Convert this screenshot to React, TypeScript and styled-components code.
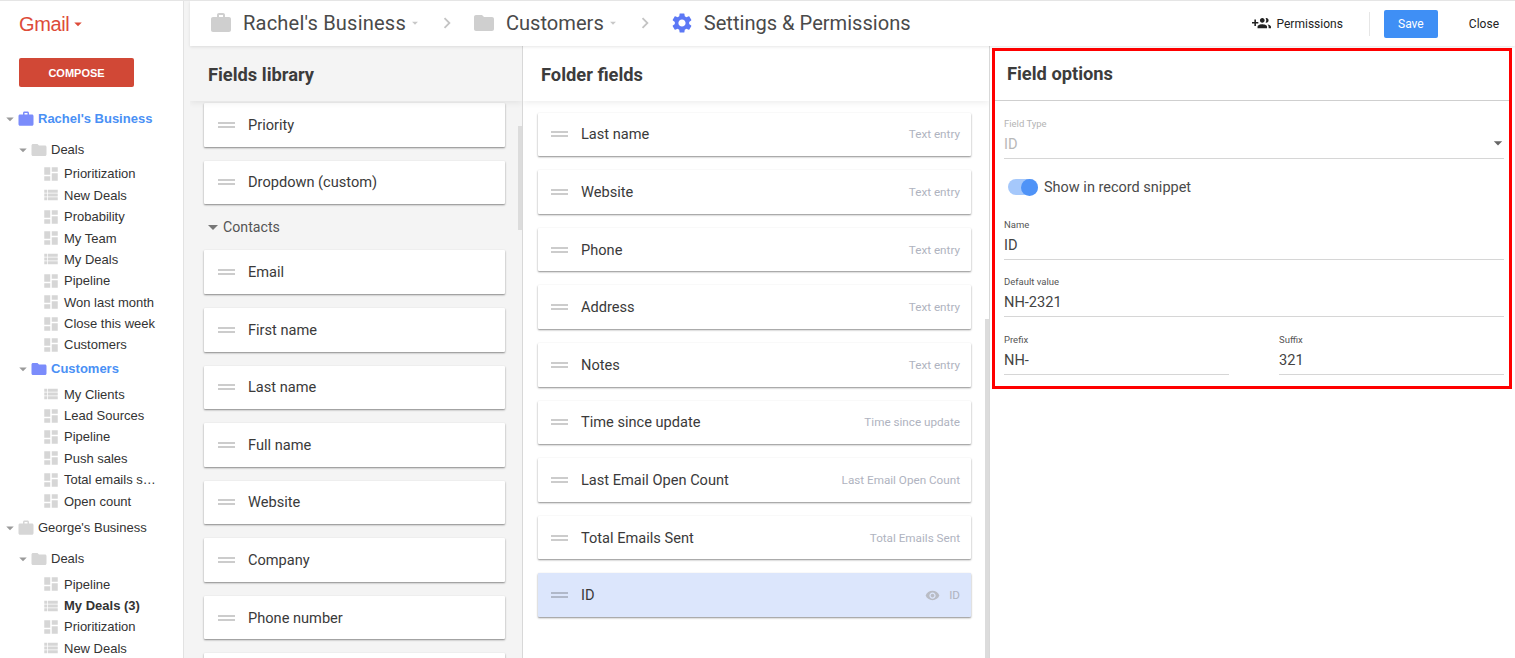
import React from 'react';
import styled, { createGlobalStyle } from 'styled-components';
import {
  MdWork,
  MdFolder,
  MdDashboard,
  MdViewList,
  MdSettings,
  MdVisibility,
  MdArrowDropDown,
  MdChevronRight,
} from 'react-icons/md';

const GlobalStyle = createGlobalStyle`
  html, body {
    margin: 0;
    padding: 0;
    height: 100%;
    overflow: hidden;
    background: #fff;
  }
  #root {
    height: 100%;
  }
  * {
    box-sizing: border-box;
  }
`;

const Page = styled.div`
  display: flex;
  height: 658px;
  width: 1515px;
  overflow: hidden;
  border-top: 1px solid #e5e5e5;
  font-family: Roboto, "Liberation Sans", sans-serif;
`;

const Sidebar = styled.aside`
  width: 190px;
  flex: none;
  padding-top: 13px;
  border-right: 6px solid #f4f4f4;
  box-shadow: inset -1px 0 0 #e2e2e2;
  overflow: hidden;
  font-family: "Liberation Sans", Arial, sans-serif;
`;

const GmailMenu = styled.div`
  display: flex;
  align-items: center;
  height: 20px;
  margin-left: 19px;
  font-size: 20px;
  letter-spacing: -0.4px;
  color: #dd4b39;
`;

const Compose = styled.div`
  display: flex;
  align-items: center;
  justify-content: center;
  width: 115px;
  height: 29px;
  margin: 24px 0 0 19px;
  border-radius: 2px;
  background: #d14836;
  color: #fff;
  font-size: 11px;
  font-weight: 700;
`;

const Tree = styled.div`
  display: flex;
  flex-direction: column;
  margin-top: 21px;
`;

const Row = styled.div<{ $indent: number; $before?: number; $after?: number }>`
  flex: none;
  display: flex;
  align-items: center;
  height: 21.38px;
  margin-top: ${p => p.$before ?? 0}px;
  margin-bottom: ${p => p.$after ?? 0}px;
  padding-left: ${p => p.$indent}px;
  font-size: 13px;
  color: #333;
  white-space: nowrap;
`;

const Caret = styled.span`
  display: inline-flex;
  width: 12px;
  justify-content: center;
  color: #9a9a9a;
  margin-right: 1px;

  svg {
    flex: none;
  }
`;

const TreeIcon = styled.span<{ $active?: boolean }>`
  display: inline-flex;
  width: 21px;
  margin-right: 1px;
  color: ${p => (p.$active ? '#7b8cfb' : '#d6d6d6')};
`;

const FolderIcon = styled(TreeIcon)`
  width: 20px;
`;

const RowLabel = styled.span<{ $active?: boolean; $bold?: boolean }>`
  font-weight: ${p => (p.$active || p.$bold ? 700 : 400)};
  color: ${p => (p.$active ? '#4a90f5' : '#333')};
`;

const Main = styled.div`
  flex: 1;
  min-width: 0;
  display: flex;
  flex-direction: column;
`;

const TopBar = styled.header`
  display: flex;
  align-items: center;
  flex: none;
  height: 45px;
  padding: 0 16px 2px 19px;
  position: relative;
  z-index: 2;
  box-shadow: 0 1px 3px rgba(0, 0, 0, 0.1);
`;

const Crumb = styled.div<{ $tracking?: number }>`
  display: flex;
  align-items: center;
  font-size: 20.1px;
  letter-spacing: ${p => p.$tracking ?? 0}px;
  color: #4a4a4a;
  white-space: nowrap;
`;

const CrumbIcon = styled.span<{ $color: string }>`
  display: inline-flex;
  margin-right: 10px;
  color: ${p => p.$color};
`;

const CrumbCaret = styled.span`
  display: inline-flex;
  width: 14px;
  margin-left: 2px;
  justify-content: center;
  color: #c8c8c8;
`;

const CrumbSep = styled.span`
  display: inline-flex;
  width: 50px;
  justify-content: center;
  color: #c4c4c4;
`;

const Actions = styled.div`
  display: flex;
  align-items: center;
  align-self: center;
  margin-top: 2px;
  margin-left: auto;
  font-size: 12px;
  color: #222;
`;

const PermissionsLink = styled.div`
  display: flex;
  align-items: center;
  gap: 6px;
  padding-right: 26px;
  margin-right: 14px;
  border-right: 1px solid #e6e6e6;
  height: 24px;
`;

const SaveButton = styled.div`
  display: flex;
  align-items: center;
  justify-content: center;
  width: 54px;
  height: 28px;
  border-radius: 2px;
  background: #3f8ff5;
  color: #fff;
`;

const CloseLink = styled.div`
  margin-left: 31px;
`;

const Columns = styled.div`
  flex: 1;
  min-height: 0;
  display: flex;
`;

const Column = styled.section<{ $width: number; $bg: string }>`
  width: ${p => p.$width}px;
  flex: none;
  display: flex;
  flex-direction: column;
  position: relative;
  overflow: hidden;
  background: ${p => p.$bg};
  border-right: 1px solid #d8d8d8;
`;

const ColumnTitle = styled.h2`
  flex: none;
  display: flex;
  align-items: center;
  margin: 0;
  height: 55px;
  padding-top: 1px;
  padding-left: 18px;
  font-size: 18.3px;
  font-weight: 700;
  color: #3c3c3c;
  position: relative;
  z-index: 1;
  box-shadow: 0 2px 6px rgba(0, 0, 0, 0.07);
`;

const CardList = styled.div<{ $inset: number; $top: number; $right: number }>`
  flex: 1;
  display: flex;
  flex-direction: column;
  overflow: hidden;
  padding: ${p => p.$top}px ${p => p.$right}px 0 ${p => p.$inset}px;
`;

const Card = styled.div<{ $selected?: boolean; $lead?: number }>`
  flex: none;
  display: flex;
  align-items: center;
  height: 43.58px;
  margin-bottom: 14px;
  padding: 0 11px 0 ${p => p.$lead ?? 14}px;
  border-radius: 1px;
  background: ${p => (p.$selected ? '#dce6fc' : '#fff')};
  box-shadow: 0 1px 2px rgba(0, 0, 0, 0.45);
`;

const DragHandle = styled.span`
  flex: none;
  width: 17px;
  height: 6px;
  margin-right: 13px;
  border-top: 2px solid rgba(0, 0, 0, 0.2);
  border-bottom: 2px solid rgba(0, 0, 0, 0.2);
`;

const CardName = styled.span`
  font-size: 14.6px;
  color: #3a3a3a;
`;

const CardType = styled.span`
  margin-left: auto;
  font-size: 11.7px;
  color: #afb3c0;
`;

const EyeIcon = styled.span`
  display: inline-flex;
  margin-left: auto;
  margin-right: 9px;
  color: #b9bcc5;
`;

const SelectedType = styled.span`
  font-size: 11.7px;
  color: #afb3c0;
`;

const GroupHeading = styled.div`
  flex: none;
  display: flex;
  align-items: center;
  height: 18px;
  margin: 0 0 14.21px 4px;
  font-size: 14.2px;
  color: #555;
`;

const GroupCaret = styled.span`
  width: 0;
  height: 0;
  margin-right: 5px;
  border-left: 5px solid transparent;
  border-right: 5px solid transparent;
  border-top: 5px solid #777;
`;

const ScrollThumb = styled.div<{ $top: number; $right: number; $height: number }>`
  position: absolute;
  top: ${p => p.$top}px;
  right: ${p => p.$right}px;
  width: 4px;
  height: ${p => p.$height}px;
  background: #dcdcdc;
`;

const OptionsColumn = styled.section`
  flex: 1;
  min-width: 0;
  padding: 2px 3px 0 2px;
`;

const Highlight = styled.div`
  height: 341px;
  border: 3px solid #f00;
  display: flex;
  flex-direction: column;
`;

const OptionsTitle = styled.h2`
  flex: none;
  display: flex;
  align-items: center;
  margin: 0;
  height: 50px;
  padding: 0 0 4px 12px;
  font-size: 18.3px;
  font-weight: 700;
  color: #3c3c3c;
  border-bottom: 1px solid #cfcfcf;
`;

const OptionsBody = styled.div`
  padding: 17px 5px 0 9px;
  display: flex;
  flex-direction: column;
`;

const Field = styled.div<{ $flex?: boolean }>`
  display: flex;
  flex-direction: column;
  position: relative;
  height: 41px;
  border-bottom: 1px solid #d6d6d6;
  ${p => (p.$flex ? 'flex: 1;' : '')}
`;

const FieldLabel = styled.label<{ $disabled?: boolean }>`
  font-size: 9.5px;
  line-height: 12px;
  color: ${p => (p.$disabled ? '#b4b4b4' : '#555')};
`;

const FieldValue = styled.span<{ $disabled?: boolean }>`
  margin-top: 5px;
  font-size: 14.6px;
  line-height: 18px;
  color: ${p => (p.$disabled ? '#b8b8b8' : '#444')};
`;

const SelectArrow = styled.span`
  position: absolute;
  right: -4px;
  top: 15px;
  display: inline-flex;
  color: #666;
`;

const SwitchRow = styled.div`
  display: flex;
  align-items: center;
  gap: 6px;
  height: 20px;
  margin: 18px 0 21.5px 4px;
  font-size: 14.5px;
  color: #4a4a4a;
`;

const SwitchTrack = styled.span`
  position: relative;
  width: 30px;
  height: 16px;
  border-radius: 8px;
  background: #a5c8fb;
`;

const SwitchKnob = styled.span`
  position: absolute;
  right: 0;
  top: 0;
  width: 17px;
  height: 17px;
  border-radius: 50%;
  background: #4f93f7;
`;

const FieldStack = styled.div`
  display: flex;
  flex-direction: column;
  gap: 16.5px;
`;

const FieldPair = styled.div`
  display: flex;
  gap: 50px;
`;

type TreeRow =
  | { kind: 'business' | 'folder'; label: string; active?: boolean; before?: number; after?: number }
  | { kind: 'grid' | 'list'; label: string; bold?: boolean };

const treeRows: TreeRow[] = [
  { kind: 'business', label: "Rachel's Business", active: true },
  { kind: 'folder', label: 'Deals', before: 9.5, after: 3 },
  { kind: 'grid', label: 'Prioritization' },
  { kind: 'list', label: 'New Deals' },
  { kind: 'grid', label: 'Probability' },
  { kind: 'grid', label: 'My Team' },
  { kind: 'list', label: 'My Deals' },
  { kind: 'grid', label: 'Pipeline' },
  { kind: 'grid', label: 'Won last month' },
  { kind: 'grid', label: 'Close this week' },
  { kind: 'grid', label: 'Customers' },
  { kind: 'folder', label: 'Customers', active: true, before: 2.5, after: 4 },
  { kind: 'list', label: 'My Clients' },
  { kind: 'grid', label: 'Lead Sources' },
  { kind: 'grid', label: 'Pipeline' },
  { kind: 'grid', label: 'Push sales' },
  { kind: 'grid', label: 'Total emails s…' },
  { kind: 'grid', label: 'Open count' },
  { kind: 'business', label: "George's Business", before: 5.5 },
  { kind: 'folder', label: 'Deals', before: 9.5, after: 4 },
  { kind: 'grid', label: 'Pipeline' },
  { kind: 'list', label: 'My Deals (3)', bold: true },
  { kind: 'grid', label: 'Prioritization' },
  { kind: 'list', label: 'New Deals' },
];

const libraryBefore = ['Priority', 'Dropdown (custom)'];
const libraryContacts = [
  'Email',
  'First name',
  'Last name',
  'Full name',
  'Website',
  'Company',
  'Phone number',
];

const folderFields = [
  ['Last name', 'Text entry'],
  ['Website', 'Text entry'],
  ['Phone', 'Text entry'],
  ['Address', 'Text entry'],
  ['Notes', 'Text entry'],
  ['Time since update', 'Time since update'],
  ['Last Email Open Count', 'Last Email Open Count'],
  ['Total Emails Sent', 'Total Emails Sent'],
];

const GroupAddIcon: React.FC = () => (
  <svg width="19" height="19" viewBox="0 0 24 24" fill="currentColor">
    <path d="M8 10H5V7H3v3H0v2h3v3h2v-3h3v-2zm10 1c1.66 0 2.99-1.34 2.99-3S19.66 5 18 5c-.32 0-.63.05-.91.14.57.81.9 1.79.9 2.86s-.34 2.04-.9 2.86c.28.09.59.14.91.14zm-5 0c1.66 0 2.99-1.34 2.99-3S14.66 5 13 5s-3 1.34-3 3 1.34 3 3 3zm6.62 2.16c.83.73 1.38 1.66 1.38 2.84v2h3v-2c0-1.54-2.37-2.49-4.38-2.84zM13 13c-2 0-6 1-6 3v2h12v-2c0-2-4-3-6-3z" />
  </svg>
);

const SidebarRow: React.FC<{ row: TreeRow }> = ({ row }) => {
  if (row.kind === 'grid' || row.kind === 'list') {
    const Icon = row.kind === 'grid' ? MdDashboard : MdViewList;
    return (
      <Row $indent={42}>
        <TreeIcon>
          <Icon size={18} />
        </TreeIcon>
        <RowLabel $bold={row.bold}>{row.label}</RowLabel>
      </Row>
    );
  }
  const Icon = row.kind === 'business' ? MdWork : MdFolder;
  return (
    <Row $indent={row.kind === 'business' ? 4 : 17} $before={row.before} $after={row.after}>
      <Caret>
        <MdArrowDropDown size={18} />
      </Caret>
      <FolderIcon $active={row.active}>
        <Icon size={18} />
      </FolderIcon>
      <RowLabel $active={row.active}>{row.label}</RowLabel>
    </Row>
  );
};

const App: React.FC = () => {
  return (
    <>
      <GlobalStyle />
      <Page>
        <Sidebar>
          <GmailMenu>
            Gmail
            <MdArrowDropDown size={18} />
          </GmailMenu>
          <Compose>COMPOSE</Compose>
          <Tree>
            {treeRows.map((row, i) => (
              <SidebarRow key={i} row={row} />
            ))}
          </Tree>
        </Sidebar>

        <Main>
          <TopBar>
            <Crumb $tracking={0.18}>
              <CrumbIcon $color="#cfcfcf">
                <MdWork size={24} />
              </CrumbIcon>
              Rachel's Business
              <CrumbCaret>
                <MdArrowDropDown size={16} />
              </CrumbCaret>
            </Crumb>
            <CrumbSep>
              <MdChevronRight size={22} />
            </CrumbSep>
            <Crumb>
              <CrumbIcon $color="#cfcfcf">
                <MdFolder size={24} />
              </CrumbIcon>
              Customers
              <CrumbCaret>
                <MdArrowDropDown size={16} />
              </CrumbCaret>
            </Crumb>
            <CrumbSep>
              <MdChevronRight size={22} />
            </CrumbSep>
            <Crumb>
              <CrumbIcon $color="#5c78f5">
                <MdSettings size={24} />
              </CrumbIcon>
              Settings &amp; Permissions
            </Crumb>
            <Actions>
              <PermissionsLink>
                <GroupAddIcon />
                Permissions
              </PermissionsLink>
              <SaveButton>Save</SaveButton>
              <CloseLink>Close</CloseLink>
            </Actions>
          </TopBar>

          <Columns>
            <Column $width={333} $bg="#f4f4f4">
              <ColumnTitle>Fields library</ColumnTitle>
              <CardList $inset={14} $top={2} $right={17}>
                {libraryBefore.map(name => (
                  <Card key={name}>
                    <DragHandle />
                    <CardName>{name}</CardName>
                  </Card>
                ))}
                <GroupHeading>
                  <GroupCaret />
                  Contacts
                </GroupHeading>
                {libraryContacts.map(name => (
                  <Card key={name}>
                    <DragHandle />
                    <CardName>{name}</CardName>
                  </Card>
                ))}
                <Card />
              </CardList>
              <ScrollThumb $top={80} $right={0} $height={104} />
            </Column>

            <Column $width={467} $bg="#fff">
              <ColumnTitle>Folder fields</ColumnTitle>
              <CardList $inset={15} $top={11.7} $right={18}>
                {folderFields.map(([name, type]) => (
                  <Card key={name} $lead={13}>
                    <DragHandle />
                    <CardName>{name}</CardName>
                    <CardType>{type}</CardType>
                  </Card>
                ))}
                <Card $selected $lead={13}>
                  <DragHandle />
                  <CardName>ID</CardName>
                  <EyeIcon>
                    <MdVisibility size={15} />
                  </EyeIcon>
                  <SelectedType>ID</SelectedType>
                </Card>
              </CardList>
              <ScrollThumb $top={273} $right={0} $height={340} />
            </Column>

            <OptionsColumn>
              <Highlight>
                <OptionsTitle>Field options</OptionsTitle>
                <OptionsBody>
                  <Field>
                    <FieldLabel $disabled>Field Type</FieldLabel>
                    <FieldValue $disabled>ID</FieldValue>
                    <SelectArrow>
                      <MdArrowDropDown size={20} />
                    </SelectArrow>
                  </Field>
                  <SwitchRow>
                    <SwitchTrack>
                      <SwitchKnob />
                    </SwitchTrack>
                    Show in record snippet
                  </SwitchRow>
                  <FieldStack>
                    <Field>
                      <FieldLabel>Name</FieldLabel>
                      <FieldValue>ID</FieldValue>
                    </Field>
                    <Field>
                      <FieldLabel>Default value</FieldLabel>
                      <FieldValue>NH-2321</FieldValue>
                    </Field>
                    <FieldPair>
                      <Field $flex>
                        <FieldLabel>Prefix</FieldLabel>
                        <FieldValue>NH-</FieldValue>
                      </Field>
                      <Field $flex>
                        <FieldLabel>Suffix</FieldLabel>
                        <FieldValue>321</FieldValue>
                      </Field>
                    </FieldPair>
                  </FieldStack>
                </OptionsBody>
              </Highlight>
            </OptionsColumn>
          </Columns>
        </Main>
      </Page>
    </>
  );
};

export default App;
